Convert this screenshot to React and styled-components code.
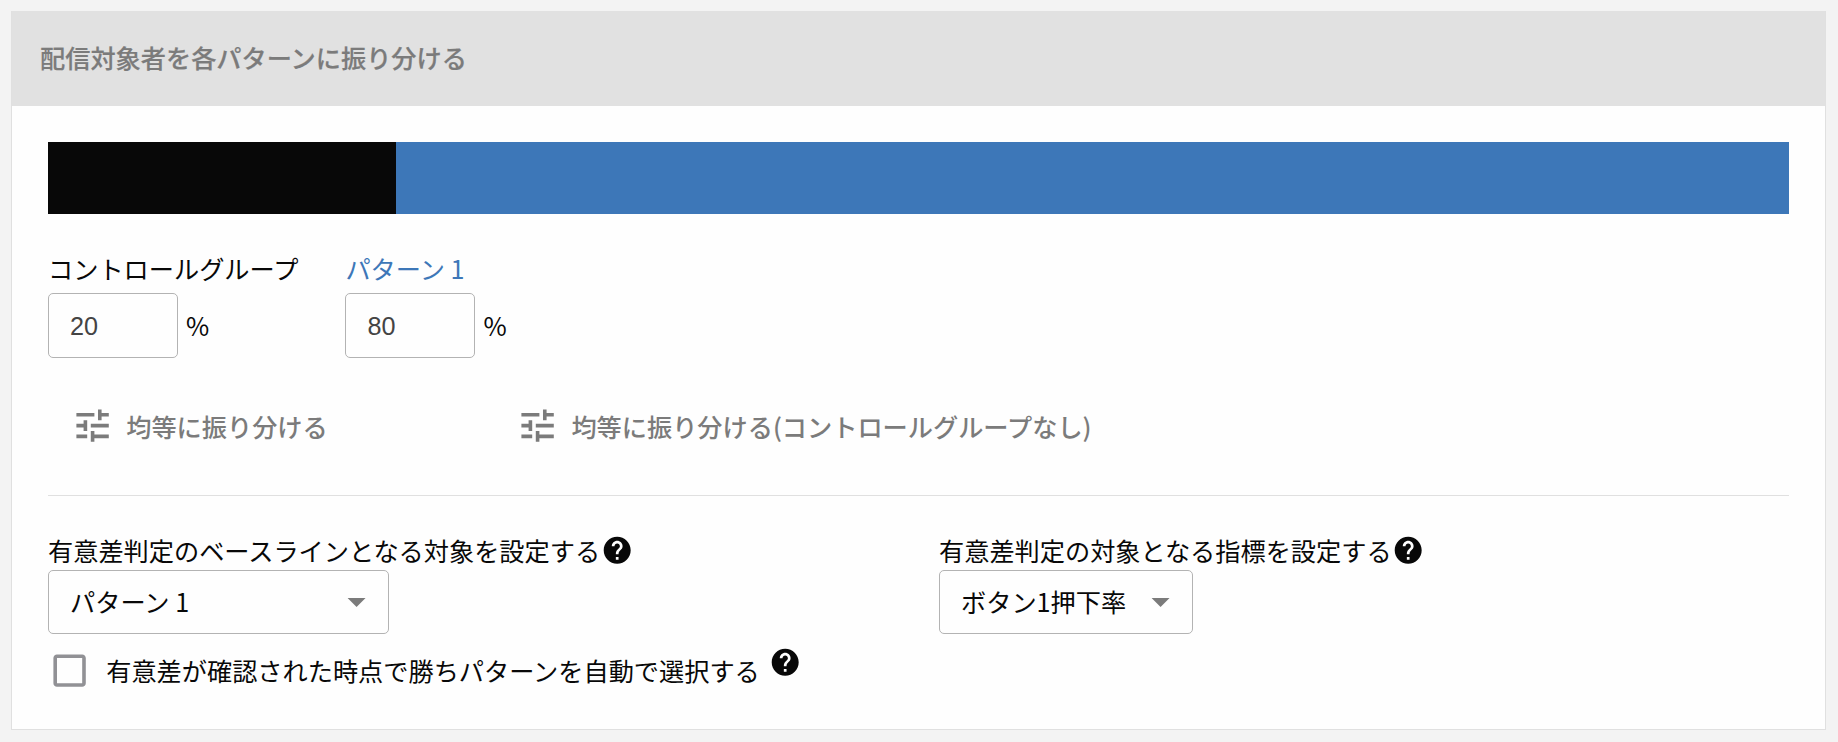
import { useState } from "react";
import styled, { createGlobalStyle } from "styled-components";
import {
  MdArrowDropDown,
  MdCheckBoxOutlineBlank,
  MdHelp,
  MdTune,
} from "react-icons/md";

const GlobalStyle = createGlobalStyle`
  * {
    box-sizing: border-box;
  }
  body {
    margin: 0;
    background: #f3f3f3;
    color: #080808;
    font-family: "Noto Sans CJK JP", sans-serif;
    font-size: 25.2px;
    line-height: 36px;
  }
`;

const Panel = styled.section`
  margin: 11px 12px 12px 11px;
  height: 719px;
  background: #fefefe;
  border: 1px solid #e0e0e0;
  border-top: none;
`;

const PanelHeader = styled.header`
  display: flex;
  align-items: center;
  height: 95px;
  padding: 0 28px 4px;
  background: #e1e1e1;
  color: #7b7b7b;
  font-weight: 500;
  -webkit-text-stroke: 0.2px #7b7b7b;
`;

const PanelBody = styled.div`
  padding: 36px;
`;

const RatioBar = styled.div`
  display: flex;
  height: 72px;
`;

const RatioSegment = styled.div`
  background: ${({ $color }) => $color};
`;

const Groups = styled.div`
  display: flex;
  gap: 47px;
  margin-top: 36px;
`;

const GroupLabel = styled.div`
  height: 43px;
  color: ${({ $color }) => $color};
  white-space: nowrap;
`;

const GroupField = styled.label`
  display: flex;
  align-items: center;
  gap: 8px;
`;

const Percent = styled.span`
  padding-bottom: 2px;
`;

const RatioInput = styled.input`
  width: 130px;
  height: 65px;
  padding: 2px 21px 0;
  border: 1px solid #b3b3b3;
  border-radius: 5px;
  background: transparent;
  color: #444;
  font-family: "Liberation Sans", sans-serif;
  font-size: 25.2px;
`;

const Actions = styled.div`
  display: flex;
  gap: 142.5px;
  margin-top: 35px;
`;

const ActionButton = styled.button`
  display: flex;
  align-items: center;
  gap: 12px;
  height: 65px;
  padding: 0 23px;
  border: none;
  background: none;
  color: #7b7b7b;
  font: inherit;
  font-weight: 500;
  white-space: nowrap;

  svg {
    width: 43.2px;
    height: 43.2px;
    margin-top: 1px;
  }
`;

const Divider = styled.hr`
  height: 1px;
  margin: 37px 0 0;
  border: none;
  background: #e0e0e0;
`;

const Settings = styled.div`
  display: grid;
  grid-template-columns: 891px 1fr;
  margin-top: 36px;
`;

const SettingLabel = styled.div`
  display: flex;
  height: 38px;
  white-space: nowrap;
`;

const HelpIcon = styled(MdHelp)`
  flex: none;
  width: 32.4px;
  height: 32.4px;
  margin: ${({ $margin }) => $margin};
`;

const SelectBox = styled.div`
  display: flex;
  align-items: center;
  justify-content: space-between;
  width: ${({ $width }) => $width}px;
  height: 64px;
  padding: 0 10px 0 21px;
  border: 1px solid #b3b3b3;
  border-radius: 5px;
  white-space: nowrap;

  span {
    padding-bottom: 2px;
  }

  svg {
    width: 43.2px;
    height: 43.2px;
    color: #7b7b7b;
  }
`;

const AutoSelect = styled.div`
  display: flex;
  align-items: center;
  height: 44px;
  margin-top: 14px;
  white-space: nowrap;
`;

const CheckIcon = styled(MdCheckBoxOutlineBlank)`
  flex: none;
  width: 43.2px;
  height: 43.2px;
  margin: 1px 15px 0 0;
  color: #919195;
`;

const groups = [
  { key: "control", name: "コントロールグループ", color: "#080808", bar: "#080808" },
  { key: "pattern1", name: "パターン 1", color: "#3d77b8", bar: "#3d77b8" },
];

function Select({ value, width }) {
  return (
    <SelectBox $width={width}>
      <span>{value}</span>
      <MdArrowDropDown />
    </SelectBox>
  );
}

function App() {
  // percentage of recipients for each group
  const [ratios, setRatios] = useState({ control: 20, pattern1: 80 });

  const changeRatio = (key, value) => {
    const ratio = Math.min(100, Math.max(0, Number(value) || 0));
    const other = key === "control" ? "pattern1" : "control";
    setRatios({ [key]: ratio, [other]: 100 - ratio });
  };

  return (
    <>
      <GlobalStyle />
      <Panel>
        <PanelHeader>配信対象者を各パターンに振り分ける</PanelHeader>
        <PanelBody>
          <RatioBar>
            {groups.map((group) => (
              <RatioSegment
                key={group.key}
                $color={group.bar}
                style={{ width: `${ratios[group.key]}%` }}
              />
            ))}
          </RatioBar>

          <Groups>
            {groups.map((group) => (
              <div key={group.key}>
                <GroupLabel $color={group.color}>{group.name}</GroupLabel>
                <GroupField>
                  <RatioInput
                    value={ratios[group.key]}
                    onChange={(e) => changeRatio(group.key, e.target.value)}
                  />
                  <Percent>%</Percent>
                </GroupField>
              </div>
            ))}
          </Groups>

          <Actions>
            <ActionButton
              onClick={() => setRatios({ control: 50, pattern1: 50 })}
            >
              <MdTune />
              均等に振り分ける
            </ActionButton>
            <ActionButton
              onClick={() => setRatios({ control: 0, pattern1: 100 })}
            >
              <MdTune />
              均等に振り分ける(コントロールグループなし)
            </ActionButton>
          </Actions>

          <Divider />

          <Settings>
            <div>
              <SettingLabel>
                有意差判定のベースラインとなる対象を設定する
                <HelpIcon $margin="1.5px 0 0 0.5px" />
              </SettingLabel>
              <Select value="パターン 1" width={341} />
            </div>
            <div>
              <SettingLabel>
                有意差判定の対象となる指標を設定する
                <HelpIcon $margin="1.5px 0 0" />
              </SettingLabel>
              <Select value="ボタン1押下率" width={254} />
            </div>
          </Settings>

          <AutoSelect>
            <CheckIcon />
            有意差が確認された時点で勝ちパターンを自動で選択する
            <HelpIcon $margin="0 0 15px 9px" />
          </AutoSelect>
        </PanelBody>
      </Panel>
    </>
  );
}

export default App;
